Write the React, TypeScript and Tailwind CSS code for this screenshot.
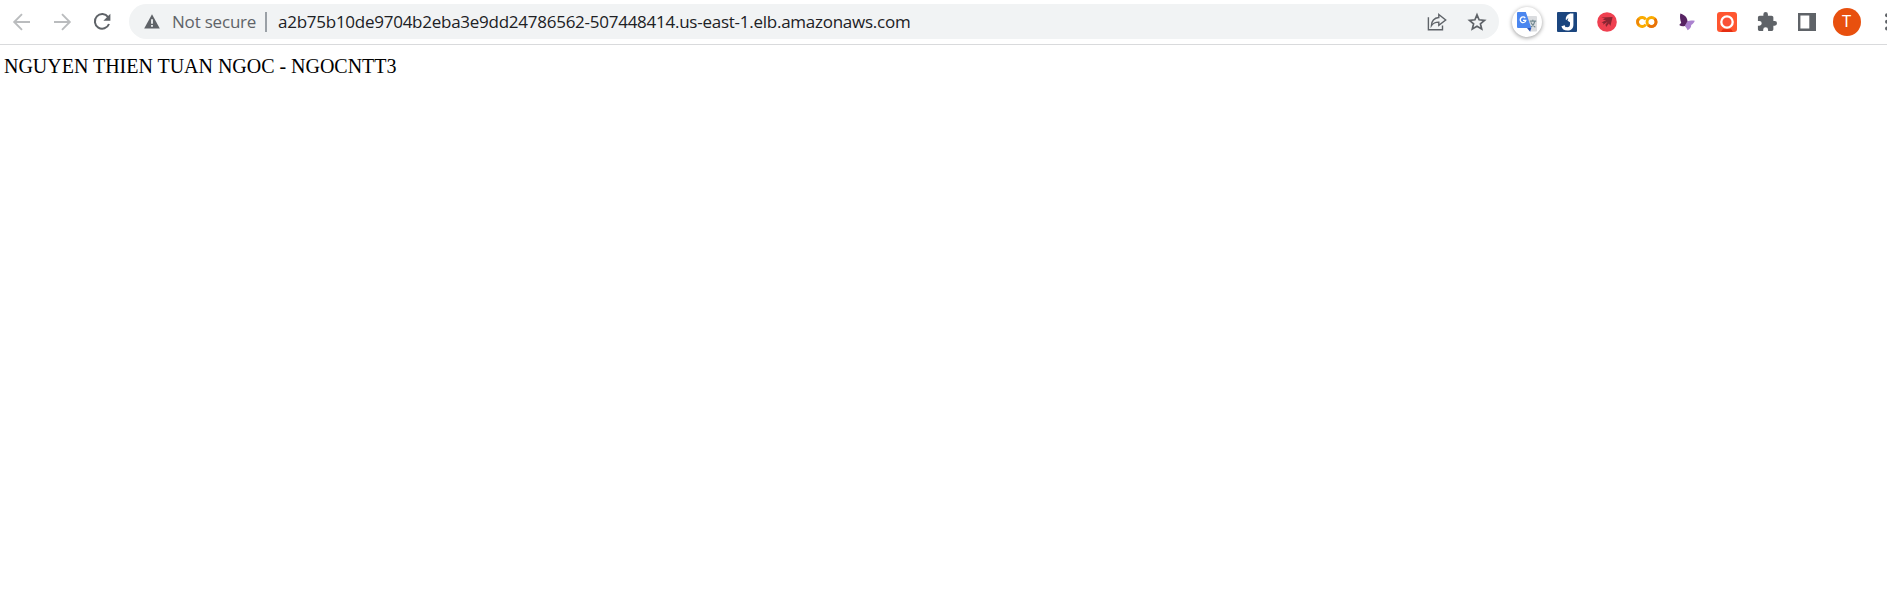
import type { ReactNode } from 'react';

function Slot({ children }: { children: ReactNode }) {
  return <div className="flex h-[43px] w-10 shrink-0 items-center justify-center">{children}</div>;
}

function Arrow({ forward = false }: { forward?: boolean }) {
  return (
    <svg width="20" height="20" viewBox="0 0 20 20" fill="none" stroke="#babcbe" strokeWidth="1.9" className={forward ? 'rotate-180' : ''}>
      <path d="M18 10H3M10 2.2 2.2 10l7.8 7.8" />
    </svg>
  );
}

function Reload() {
  return (
    <svg width="20" height="20" viewBox="0 0 20 20" fill="none">
      <path d="M16.1 5.1A7.3 7.3 0 1 0 17 12" stroke="#5f6368" strokeWidth="2" />
      <path d="M18.4 1.8v7h-7z" fill="#5f6368" />
    </svg>
  );
}

function Warning() {
  return (
    <svg width="16" height="15" viewBox="0 0 16 15">
      <path d="M8 .3 15.8 14.5H.2z" fill="#5f6368" />
      <path d="M7.1 5.3h1.8v4.4H7.1zM7.1 11h1.8v1.8H7.1z" fill="#f1f3f4" />
    </svg>
  );
}

function Share() {
  return (
    <svg width="20" height="18" viewBox="0 0 20 18" fill="none" stroke="#5f6368" strokeWidth="1.4">
      <path d="M1.4 4.3v12.4h14.1v-4.2" />
      <path d="M11.8 1.5 18.7 7l-6.9 5.3V9.1C8.3 9 6 10.3 4.4 12.7c.2-4.6 2.7-7.7 7.4-8.2z" />
    </svg>
  );
}

function Star() {
  return (
    <svg width="20" height="20" viewBox="0 0 20 20" fill="none" stroke="#5f6368" strokeWidth="1.7">
      <path d="m10 2.8 2.1 5 5.4.5-4.1 3.5 1.3 5.2-4.7-2.8L5.3 17l1.3-5.2-4.1-3.5 5.4-.5z" />
    </svg>
  );
}

function Translate() {
  return (
    <div className="flex size-[30px] items-center justify-center rounded-full bg-white shadow-[0_1px_4px_rgba(0,0,0,0.4)]">
      <svg width="20" height="20" viewBox="0 0 20 20">
        <path d="M8 4h11a1 1 0 0 1 1 1v13.6a1 1 0 0 1-1 1h-6z" fill="#dadcdf" />
        <path d="m10 16 4.3 0-1.2 3.8z" fill="#3056b5" />
        <path d="M1 0h7.8l5.5 16H1a1 1 0 0 1-1-1V1a1 1 0 0 1 1-1z" fill="#4a86ef" />
        <path d="M8.3 6.1A2.8 2.8 0 1 0 8.8 8.3H6" fill="none" stroke="#fff" strokeWidth="1.3" />
        <path d="M12.8 9.2h6.4M15.8 7.8v1.4M17.8 9.4c-.5 2.7-1.9 4.5-3.8 5.7M13.9 10.4c.9 2.3 2.2 3.7 4.4 4.9" fill="none" stroke="#708890" strokeWidth="1.2" />
      </svg>
    </div>
  );
}

function JBadge() {
  return (
    <svg width="20" height="20" viewBox="0 0 20 20">
      <rect width="20" height="20" rx="1" fill="#1b467f" />
      <path d="M13 1.6h3.4v11.2c0 3.6-2.3 5.8-6 5.8-3.3 0-5.4-1.6-6-4.4l3.3-.9c.3 1.3 1.1 2 2.5 2 1.8 0 2.8-1 2.8-3z" fill="#fff" />
      <path d="M13.2 1.6C10.2 2.5 8.6 4.8 8.7 7.6l4.5 3z" fill="#fff" />
      <path d="m11.4 5.8-4.8 5.4 2.6.4-1.3 4 5-5.5-2.7-.4z" fill="#1b467f" />
    </svg>
  );
}

function Bird() {
  return (
    <svg width="20" height="20" viewBox="0 0 20 20">
      <circle cx="10" cy="10" r="9.8" fill="#ef4050" />
      <path d="M4.2 5.5 15.6 5l-2.2 9-1.5-2.6L9.2 15l-.8-2.2 2.3-3.1-4.6 3 .3-1.8-1.9-.4 4.7-2.4-3.6-.2 2.3-1.3z" fill="#8c2633" />
    </svg>
  );
}

function Colab() {
  return (
    <svg width="22" height="14" viewBox="0 0 22 14" fill="none" strokeWidth="2.9">
      <path d="M9.8 9.5A4.5 4.5 0 1 1 9.8 4.5" stroke="#f9ab00" />
      <path d="M2.8 10.2a4.5 4.5 0 0 1 0-6.4" stroke="#e8710a" strokeOpacity=".6" />
      <circle cx="15.5" cy="7" r="4.5" stroke="#f9ab00" />
      <path d="M18.7 3.8a4.5 4.5 0 0 1-6.4 6.4" stroke="#e8710a" />
    </svg>
  );
}

function Butterfly() {
  return (
    <svg width="18" height="18" viewBox="0 0 18 18">
      <path d="M9.2 8.2c2.2-.9 4.6-1.1 7.6-.4-.8 2-2 3.5-3.6 4.3.1 2.3-1.3 4.1-3.6 5.1-.6-1.6-1.5-2.9-2.8-4.2z" fill="#ab82cf" />
      <path d="M2.3.5C6.5 1.8 9.2 4.2 9.5 8.2L6.8 13c-1.9.6-3.8.4-5.6-.9l2-2.4C2.1 6.9 1.7 3.7 2.3.5z" fill="#572363" />
    </svg>
  );
}

function Recorder() {
  return (
    <svg width="20" height="20" viewBox="0 0 20 20">
      <rect width="20" height="20" rx="3" fill="#ff5630" />
      <path d="M5.8 17.2h8.4l1.8 2.8H4z" fill="#e52e12" />
      <circle cx="10" cy="10" r="5.7" fill="#fa5137" stroke="#fff" strokeWidth="2.3" />
    </svg>
  );
}

function Puzzle() {
  return (
    <svg width="20" height="20" viewBox="1 1 22 22" fill="#5f6368">
      <path d="M20.5 11H19V7c0-1.1-.9-2-2-2h-4V3.5a2.5 2.5 0 0 0-5 0V5H4c-1.1 0-1.99.9-1.99 2v3.8H3.5a2.7 2.7 0 0 1 0 5.4H2V20c0 1.1.9 2 2 2h3.8v-1.5a2.7 2.7 0 0 1 5.4 0V22H17c1.1 0 2-.9 2-2v-4h1.5a2.5 2.5 0 0 0 0-5z" />
    </svg>
  );
}

function SidePanel() {
  return (
    <svg width="18" height="18" viewBox="0 0 18 18">
      <path fillRule="evenodd" d="M0 0h18v18H0zM2.4 2.4v13.2h8.9V2.4z" fill="#5f6368" />
    </svg>
  );
}

function Menu() {
  return (
    <svg width="4" height="18" viewBox="0 0 4 18" fill="#5f6368">
      <circle cx="2" cy="2.2" r="2" />
      <circle cx="2" cy="8.8" r="2" />
      <circle cx="2" cy="15.4" r="2" />
    </svg>
  );
}

export default function App() {
  return (
    <div className="flex h-[616px] w-full flex-col overflow-hidden bg-white">
      <header className="flex h-[45px] shrink-0 border-b border-[#d9dadc]">
        <div className="flex w-[129px] shrink-0 pl-[1.5px]">
          <Slot><Arrow /></Slot>
          <Slot><Arrow forward /></Slot>
          <Slot><Reload /></Slot>
        </div>
        <div className="mt-1 flex h-[35px] w-[1370px] shrink-0 items-center rounded-full bg-[#f1f3f4] pl-[15px] font-['Open_Sans',sans-serif] text-[17px] leading-[35px] whitespace-nowrap">
          <Warning />
          <div className="ml-3 w-[93px] shrink-0 text-[#5f6368]">
            <span className="tracking-[-0.2px]">Not secure</span>
          </div>
          <div className="h-5 w-[2px] shrink-0 bg-[#9aa0a6]" />
          <div className="ml-[11px] grow text-[#202124]">
            <span className="tracking-[-0.255px]">a2b75b10de9704b2eba3e9dd24786562-507448414.us-east-1.elb.amazonaws.com</span>
          </div>
          <div className="flex pr-[2px]">
            <Slot><Share /></Slot>
            <Slot><Star /></Slot>
          </div>
        </div>
        <div className="flex shrink-0 pl-[7.5px]">
          <Slot><Translate /></Slot>
          <Slot><JBadge /></Slot>
          <Slot><Bird /></Slot>
          <Slot><Colab /></Slot>
          <Slot><Butterfly /></Slot>
          <Slot><Recorder /></Slot>
          <Slot><Puzzle /></Slot>
          <Slot><SidePanel /></Slot>
          <Slot>
            <div className="flex size-7 items-center justify-center rounded-full bg-[#e8500e] font-[Roboto,sans-serif] text-[16px] leading-none text-white">T</div>
          </Slot>
          <Slot><Menu /></Slot>
        </div>
      </header>
      <main className="px-1 pt-[10px] font-['Liberation_Serif',serif] text-[20px] leading-[23px] tracking-[-0.02px] text-black">
        NGUYEN THIEN TUAN NGOC - NGOCNTT3
      </main>
    </div>
  );
}
